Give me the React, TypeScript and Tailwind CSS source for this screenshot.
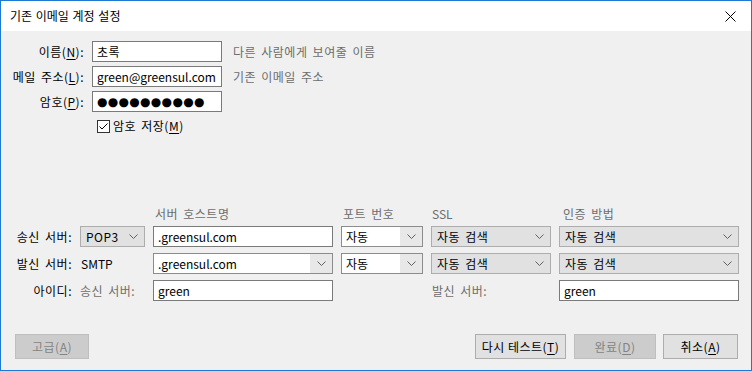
import React from 'react';

const U = ({ c }: { c: string }) => <span className="underline underline-offset-[2px]">{c}</span>;

function Chevron() {
  return (
    <svg width="9" height="5" viewBox="0 0 9 5" className="shrink-0">
      <path d="M0.5 0.5L4.5 4.5L8.5 0.5" fill="none" stroke="#606060" strokeWidth="1" />
    </svg>
  );
}

function TextBox({ value, className = '' }: { value: React.ReactNode; className?: string }) {
  return (
    <div className={`h-[21px] border border-[#7a7a7a] bg-white flex items-center pl-[4px] overflow-hidden whitespace-nowrap ${className}`}>
      {value}
    </div>
  );
}

// read-only dropdown, gray face
function Select({ value }: { value: string }) {
  return (
    <div className="h-[21px] border border-[#adadad] bg-[#e1e1e1] flex items-center justify-between pl-[5px] pr-[6px] whitespace-nowrap">
      <span className="tracking-[0.5px]">{value}</span>
      <Chevron />
    </div>
  );
}

// editable combobox, white edit area + arrow button
function Combo({ value }: { value: string }) {
  return (
    <div className="h-[21px] border border-[#8c8c8c] bg-white flex items-stretch whitespace-nowrap">
      <span className="flex-1 flex items-center pl-[4px]">{value}</span>
      <span className="w-[22px] bg-[#e8e8e8] flex items-center justify-center">
        <Chevron />
      </span>
    </div>
  );
}

function Button({ children, disabled, className = '' }: { children: React.ReactNode; disabled?: boolean; className?: string }) {
  return (
    <button
      className={`h-[25px] border flex items-center justify-center tracking-[0.5px] ${
        disabled ? 'bg-[#cccccc] border-[#bfbfbf] text-[#838383]' : 'bg-[#e1e1e1] border-[#adadad] text-black'
      } ${className}`}
    >
      {children}
    </button>
  );
}

export default function App() {
  return (
    <div className="w-[752px] h-[371px] border border-[#1c7ad4] bg-[#f0f0f0] flex flex-col font-['Noto_Sans_CJK_KR',sans-serif] text-[12px] text-black leading-none select-none [word-spacing:2px]">
      {/* title bar */}
      <div className="h-[30px] bg-white flex items-center justify-between pl-[9px] pr-[15px] shrink-0 [word-spacing:1px]">
        <span>기존 이메일 계정 설정</span>
        <svg width="11" height="11" viewBox="0 0 11 11">
          <path d="M0.5 0.5L10.5 10.5M10.5 0.5L0.5 10.5" stroke="#000" strokeWidth="1" />
        </svg>
      </div>

      {/* account */}
      <div className="pt-[10px] grid grid-cols-[83px_130px_auto] gap-x-[8px] gap-y-[4px] items-center">
        <span className="text-right tracking-[0.5px]">이름(<U c="N" />):</span>
        <TextBox value={<span className="tracking-[0.5px]">초록</span>} />
        <span className="pl-[3px] text-[#6d6d6d] tracking-[0.5px]">다른 사람에게 보여줄 이름</span>

        <span className="text-right whitespace-nowrap tracking-[0.5px]">메일 주소(<U c="L" />):</span>
        <TextBox value="green@greensul.com" />
        <span className="pl-[3px] text-[#6d6d6d] tracking-[0.5px]">기존 이메일 주소</span>

        <span className="text-right tracking-[0.5px]">암호(<U c="P" />):</span>
        <TextBox value={<span className="font-['DejaVu_Sans'] text-[12px] tracking-[0.3px]">●●●●●●●●●●</span>} />
        <span />
      </div>

      <div className="mt-[6px] h-[16px] flex items-center pl-[96px] gap-[3px]">
        <span className="w-[13px] h-[13px] border border-[#333333] bg-white flex items-center justify-center">
          <svg width="11" height="11" viewBox="0 0 11 11">
            <path d="M1.5 5.5L4 8L9.5 2.5" fill="none" stroke="#000" strokeWidth="1" />
          </svg>
        </span>
        <span className="tracking-[0.5px]">암호 저장(<U c="M" />)</span>
      </div>

      {/* servers */}
      <div className="mt-[72px] grid grid-cols-[71px_65px_180px_82px_120px_180px] gap-x-[8px] items-center text-[#6d6d6d] tracking-[0.5px]">
        <span />
        <span />
        <span className="h-[16px] flex items-center pl-[2px]">서버 호스트명</span>
        <span className="pl-[2px]">포트 번호</span>
        <span className="pl-[1px] tracking-normal">SSL</span>
        <span className="pl-[4px]">인증 방법</span>
      </div>

      <div className="mt-[4px] grid grid-cols-[71px_65px_180px_82px_120px_180px] gap-x-[8px] gap-y-[6px] items-center">
        <span className="text-right tracking-[0.5px]">송신 서버:</span>
        <Select value="POP3" />
        <TextBox value=".greensul.com" />
        <Combo value="자동" />
        <Select value="자동 검색" />
        <Select value="자동 검색" />

        <span className="text-right tracking-[0.5px]">발신 서버:</span>
        <span className="pl-[1px]">SMTP</span>
        <Combo value=".greensul.com" />
        <Combo value="자동" />
        <Select value="자동 검색" />
        <Select value="자동 검색" />

        <span className="text-right tracking-[0.5px]">아이디:</span>
        <span className="text-[#6d6d6d] whitespace-nowrap tracking-[0.5px]">송신 서버:</span>
        <TextBox value="green" />
        <span />
        <span className="pl-[1px] text-[#6d6d6d] tracking-[0.5px]">발신 서버:</span>
        <TextBox value="green" />
      </div>

      {/* buttons */}
      <div className="mt-[33px] flex items-center pl-[14px] pr-[13px]">
        <Button disabled className="w-[74px]">고급(<U c="A" />)</Button>
        <div className="flex-1" />
        <Button className="w-[91px]">다시 테스트(<U c="T" />)</Button>
        <Button disabled className="w-[82px] ml-[8px]">완료(<U c="D" />)</Button>
        <Button className="w-[75px] ml-[7px]">취소(<U c="A" />)</Button>
      </div>
    </div>
  );
}
